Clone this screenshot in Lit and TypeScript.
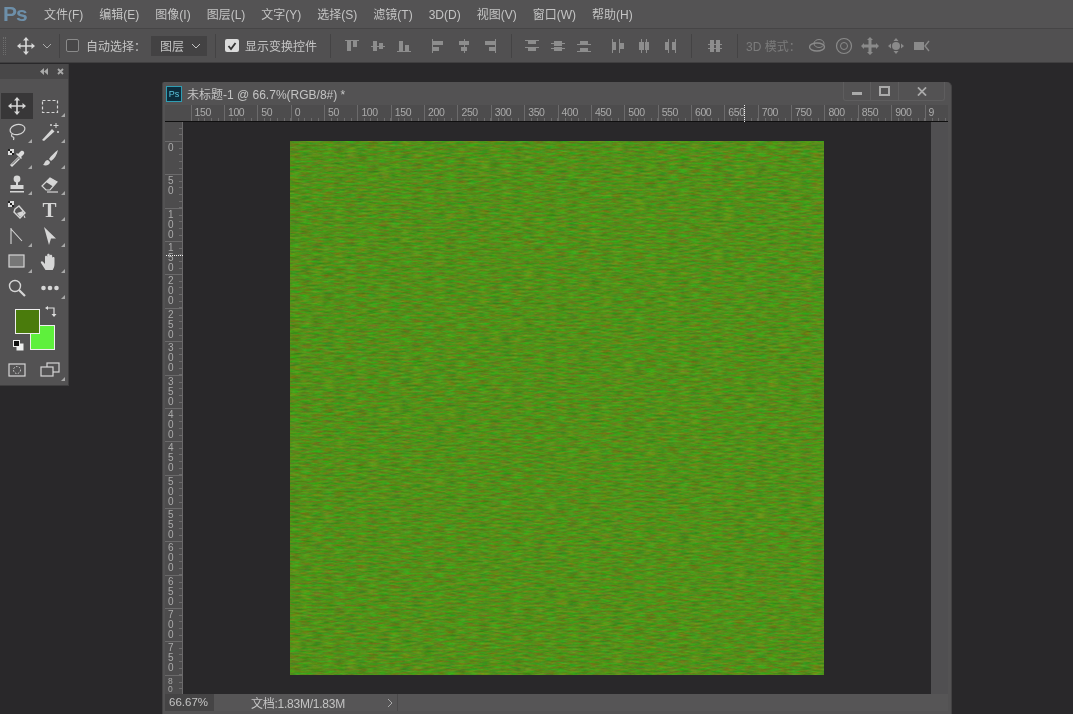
import { css, html, LitElement, svg } from "lit";
import { customElement } from "lit/decorators.js";

const MENU = ["文件(F)", "编辑(E)", "图像(I)", "图层(L)", "文字(Y)", "选择(S)", "滤镜(T)", "3D(D)", "视图(V)", "窗口(W)", "帮助(H)"];

// each align icon: [x, y, w, h] bars on a 16 box, first ones are the guide lines
type Bars = number[][];
const ALIGN_A: Bars[] = [
  [[1, 2, 14, 1], [3, 3, 4, 10], [9, 3, 4, 6]],
  [[1, 8, 14, 1], [3, 3, 4, 10], [9, 5, 4, 6]],
  [[1, 13, 14, 1], [3, 3, 4, 10], [9, 7, 4, 6]],
];
const ALIGN_B: Bars[] = [
  [[2, 1, 1, 14], [3, 3, 10, 4], [3, 9, 6, 4]],
  [[8, 1, 1, 14], [3, 3, 10, 4], [5, 9, 6, 4]],
  [[13, 1, 1, 14], [3, 3, 10, 4], [7, 9, 6, 4]],
];
const ALIGN_C: Bars[] = [
  [[1, 2, 14, 1], [1, 9, 14, 1], [4, 3, 8, 3], [4, 10, 8, 3]],
  [[1, 5, 14, 1], [1, 10, 14, 1], [4, 3, 8, 5], [4, 9, 8, 4]],
  [[1, 6, 14, 1], [1, 13, 14, 1], [4, 3, 8, 3], [4, 10, 8, 3]],
];
const ALIGN_D: Bars[] = [
  [[2, 1, 1, 14], [9, 1, 1, 14], [3, 4, 3, 8], [10, 5, 4, 6]],
  [[5, 1, 1, 14], [10, 1, 1, 14], [3, 4, 5, 8], [9, 4, 4, 8]],
  [[6, 1, 1, 14], [13, 1, 1, 14], [3, 4, 3, 8], [10, 4, 3, 8]],
];
const ALIGN_E: Bars[] = [[[3, 2, 4, 12], [9, 2, 4, 12], [1, 6, 14, 1], [1, 10, 14, 1]]];

const alignIcon = (bars: Bars) => html`<span class="align">
  <svg width="16" height="16" viewBox="0 0 16 16" fill="#8d8d8d">
    ${bars.map(([x, y, w, h]) => svg`<rect x=${x} y=${y} width=${w} height=${h}></rect>`)}
  </svg>
</span>`;

const moveIcon = svg`<path d="M10 2v16M2 10h16" stroke="currentColor" stroke-width="1.6" fill="none"/>
  <path d="M10 1l3 3.5H7zM10 19l3-3.5H7zM1 10l3.5-3v6zM19 10l-3.5-3v6z" fill="currentColor"/>`;

const checker = svg`<rect x="1" y="1" width="6" height="6" fill="#ddd"/><path d="M1 1h2v2H1zM3 3h2v2H3zM5 5h2v2H5z" fill="#222"/>`;

const TOOLS = [
  { icon: moveIcon, corner: false, active: true },
  { icon: svg`<rect x="2.5" y="4.5" width="15" height="12" fill="none" stroke="currentColor" stroke-width="1.2" stroke-dasharray="3 2"/>`, corner: true },
  { icon: svg`<ellipse cx="10.5" cy="7.5" rx="7.5" ry="5" transform="rotate(-12 10.5 7.5)" fill="none" stroke="currentColor" stroke-width="1.2"/><path d="M5 12c-1 2 0 3 1 3s1 1 .5 3" fill="none" stroke="currentColor" stroke-width="1.2"/>`, corner: true },
  { icon: svg`<path d="M2 18L12 7l2.5 2.5L4 19z" fill="currentColor"/><path d="M16 1v5M13.5 3.5h5M11 2v2M10 3h2M18 9v2M17 10h2" stroke="currentColor" fill="none"/>`, corner: true },
  { icon: svg`${checker}<path d="M4 18l-1-1 8-8 2 2-8 8zM11 6l3-3c2-1 4 1 3 3l-3 3 1 1-1 1-5-5 1-1z" fill="#ddd"/><path d="M5 16.5l6.5-6.5" stroke="#555" fill="none"/>`, corner: true },
  { icon: svg`<path d="M18 2c-3 2-7 6-9 9l2 2c3-2 6-6 7-11zM8 12c-3 0-3 3-5 5 3 1 7 0 7-3z" fill="currentColor"/>`, corner: true },
  { icon: svg`<circle cx="10" cy="5" r="3.4" fill="currentColor"/><path d="M9 8h2v3h5.500v4H3.500v-4H9zM3 17h14v1.500H3z" fill="currentColor"/>`, corner: true },
  { icon: svg`<path d="M2 12l8-8 7 4-7 8H6z" fill="none" stroke="currentColor" stroke-width="1.2"/><path d="M10 4l7 4-4 4.500-7-4.500z" fill="currentColor"/><path d="M7 18h11" stroke="currentColor" stroke-width="1.2"/>`, corner: true },
  { icon: svg`${checker}<path d="M8 9l4-3 6 7-5 5-6-6z" fill="none" stroke="currentColor" stroke-width="1.4"/><path d="M10 13l6-2 1 3-4 3z" fill="currentColor"/><path d="M17 15c1 1 2 3 1 3s-1.500-1-1-3z" fill="currentColor"/>`, corner: false },
  { text: "T", corner: true },
  { icon: svg`<path d="M4 2v16M4 3l11 12" stroke="currentColor" stroke-width="1.1" fill="none"/>`, corner: true },
  { icon: svg`<path d="M4 1l12 11.500h-5l-2 6.500z" fill="currentColor"/>`, corner: true },
  { icon: svg`<rect x="2" y="3" width="15" height="12" fill="#777" stroke="currentColor" stroke-width="1.2"/>`, corner: true },
  { icon: svg`<path d="M5.500 18L1 11c-.8-1.500 1-2.500 2-1.300L5 12V5c0-1.600 2.200-1.600 2.200 0V3c0-1.700 2.500-1.700 2.500 0v1c0-1.600 2.500-1.600 2.500 0v2c0-1.400 2.300-1.400 2.300 0v6c0 3-1 4.500-1.800 6z" fill="currentColor"/>`, corner: true },
  { icon: svg`<circle cx="8" cy="8" r="5.500" fill="none" stroke="currentColor" stroke-width="1.4"/><path d="M12 12l6 6" stroke="currentColor" stroke-width="2.200"/>`, corner: false },
  { icon: svg`<circle cx="3.500" cy="10" r="2.300" fill="currentColor"/><circle cx="10" cy="10" r="2.300" fill="currentColor"/><circle cx="16.500" cy="10" r="2.300" fill="currentColor"/>`, corner: true },
];

const MODE_3D = [
  svg`<ellipse cx="10" cy="6.500" rx="5" ry="4" fill="none" stroke="currentColor"/><ellipse cx="8" cy="10" rx="7.500" ry="4" fill="none" stroke="currentColor" stroke-width="1.400"/>`,
  svg`<circle cx="9" cy="9" r="7.500" fill="none" stroke="currentColor" stroke-width="1.200"/><circle cx="9" cy="9" r="3.500" fill="none" stroke="currentColor"/>`,
  svg`<path d="M9 2v14M2 9h14" stroke="currentColor" stroke-width="3" fill="none"/><path d="M9 0l3 3H6zM9 18l3-3H6zM0 9l3-3v6zM18 9l-3-3v6z" fill="currentColor"/>`,
  svg`<circle cx="9" cy="9" r="4" fill="currentColor"/><path d="M9 1l2.500 3h-5zM9 17l2.500-3h-5zM1 9l3-2.500v5zM17 9l-3-2.500v5z" fill="currentColor"/>`,
  svg`<rect x="1" y="5" width="10" height="8" fill="currentColor"/><path d="M16 4l-4 5 4 5" fill="none" stroke="currentColor" stroke-width="1.400"/>`,
];

const H_LABELS = [150, 100, 50, 0, 50, 100, 150, 200, 250, 300, 350, 400, 450, 500, 550, 600, 650, 700, 750, 800, 850, 900, 9];
// the window cuts the last label off after two digits
const V_LABELS = [...Array.from({ length: 16 }, (_, i) => String(i * 50)), "80"];

@customElement("app-root")
export class AppRoot extends LitElement {
  static styles = css`
    * {
      box-sizing: border-box;
    }

    :host {
      display: block;
      width: 1073px;
      height: 714px;
      overflow: hidden;
      font-family: "Liberation Sans", "Noto Sans CJK SC", sans-serif;
      font-size: 12px;
      color: #c4c4c4;
    }

    .app {
      position: relative;
      height: 714px;
      background: #29282a;
      filter: blur(0.5px);
    }

    .menubar {
      display: flex;
      align-items: center;
      height: 28px;
      background: #545354;
    }
    .logo {
      width: 44px;
      padding-left: 3px;
      font-size: 21px;
      font-weight: bold;
      letter-spacing: -1px;
      color: #6d8fa9;
    }
    .menu {
      display: flex;
      align-items: baseline;
      gap: 16px;
      margin-top: -2px;
      white-space: nowrap;
    }

    .options {
      display: flex;
      align-items: center;
      height: 35px;
      background: #515051;
      border-top: 1px solid #464546;
      border-bottom: 1px solid #403f40;
    }
    .grip {
      width: 3px;
      height: 18px;
      margin: 0 10px 0 3px;
      border-left: 1px dotted #6c6c6c;
      border-right: 1px dotted #6c6c6c;
    }
    .opt-move {
      display: flex;
      color: #d8d8d8;
    }
    .chev {
      margin-left: 5px;
      display: flex;
      color: #aaa;
    }
    .sep {
      width: 1px;
      height: 24px;
      background: #444344;
    }
    .sep-a {
      margin: 0 6px 0 6px;
    }
    .sep-b {
      margin: 0 9px 0 8px;
    }
    .sep-f {
      margin: 0 7px 0 8px;
    }
    .sep-c {
      margin: 0 10px 0 8px;
    }
    .sep-d {
      margin: 0 8px 0 13px;
    }
    .sep-e {
      margin: 0 4px 0 9px;
    }
    .box {
      width: 13px;
      height: 13px;
      border: 1px solid #8a8a8a;
      border-radius: 2px;
      background: #484748;
    }
    .auto {
      margin-left: 7px;
      white-space: nowrap;
    }
    .select {
      display: flex;
      align-items: center;
      justify-content: space-between;
      width: 56px;
      height: 20px;
      margin-left: 5px;
      padding: 0 5px 0 9px;
      background: #434243;
    }
    .check {
      display: flex;
      align-items: center;
      justify-content: center;
      width: 14px;
      height: 13px;
      border-radius: 2px;
      background: #dcdcdc;
    }
    .show {
      margin-left: 6px;
      white-space: nowrap;
    }
    .align {
      display: flex;
      justify-content: center;
      width: 26px;
    }
    .group {
      display: flex;
    }
    .gap {
      margin-left: 8px;
    }
    .mode {
      margin-left: 4px;
      width: 59px;
      white-space: nowrap;
      color: #7c7c7c;
    }
    .mode3d {
      display: flex;
      color: #8a8a8a;
    }
    .mode3d span {
      display: flex;
      justify-content: center;
      width: 26px;
    }

    .toolbox {
      position: absolute;
      left: 0;
      top: 64px;
      width: 69px;
      height: 322px;
      background: #535253;
      border-right: 1px solid #3f3e3f;
      border-bottom: 1px solid #3f3e3f;
    }
    .tb-head {
      display: flex;
      align-items: center;
      justify-content: flex-end;
      gap: 9px;
      height: 15px;
      padding-right: 4px;
      background: #484748;
      color: #a9a9a9;
    }
    .tools {
      display: grid;
      grid-template-columns: 32px 33px;
      grid-auto-rows: 26px;
      padding: 14px 0 0 1px;
    }
    .tool {
      position: relative;
      display: flex;
      align-items: center;
      justify-content: center;
      color: #d6d6d6;
    }
    .tool.active {
      background: #383738;
    }
    .tool.corner::after {
      content: "";
      position: absolute;
      right: 1px;
      bottom: 2px;
      border-style: solid;
      border-width: 0 0 4px 4px;
      border-color: transparent transparent #a8a8a8 transparent;
    }
    .tool-t {
      font-family: "Liberation Serif", serif;
      font-weight: bold;
      font-size: 21px;
      line-height: 1;
    }
    .wells {
      position: relative;
      height: 56px;
    }
    .fg,
    .bg {
      position: absolute;
      width: 25px;
      height: 25px;
      border: 1px solid #eee;
    }
    .fg {
      left: 15px;
      top: 8px;
      background: #4a7b0c;
      z-index: 1;
    }
    .bg {
      left: 30px;
      top: 24px;
      background: #5ef03c;
    }
    .swap {
      position: absolute;
      left: 45px;
      top: 5px;
      display: flex;
      color: #ddd;
    }
    .defaults {
      position: absolute;
      left: 13px;
      top: 39px;
      display: flex;
    }
    .tools.last {
      padding-top: 0;
    }

    .doc {
      position: absolute;
      left: 162px;
      top: 82px;
      display: flex;
      flex-direction: column;
      width: 790px;
      height: 632px;
      padding-left: 2px;
      padding-right: 3px;
      background: #535253;
      border-radius: 2px 5px 0 0;
      border-left: 1px solid #434243;
      border-right: 1px solid #434243;
    }
    .title {
      display: flex;
      align-items: flex-start;
      height: 23px;
      flex: none;
    }
    .ps {
      display: flex;
      align-items: center;
      justify-content: center;
      width: 16px;
      height: 16px;
      margin: 4px 0 0 1px;
      border: 1px solid #2f9db3;
      background: #0c2c3c;
      font-size: 9px;
      color: #5cc4dc;
    }
    .name {
      margin: 3px 0 0 5px;
      white-space: nowrap;
      flex: 1;
    }
    .winbtns {
      display: flex;
      height: 19px;
      margin-right: 3px;
      border: 1px solid #5e5d5e;
      border-top: none;
      border-radius: 0 0 3px 3px;
    }
    .winbtns span {
      display: flex;
      align-items: center;
      justify-content: center;
      width: 27px;
      border-right: 1px solid #5e5d5e;
      color: #aaa;
    }
    .winbtns span:nth-child(2) {
      width: 28px;
    }
    .winbtns span:last-child {
      width: 45px;
      border-right: none;
    }

    .hruler {
      display: flex;
      flex: none;
      height: 17px;
      padding-left: 25.6px;
      overflow: hidden;
      background: #4d4c4d;
      border-bottom: 1px solid #0f0f0f;
    }
    .hcell {
      flex: 0 0 33.37px;
      padding-left: 3px;
      border-left: 1px solid #6b6a6b;
      font-size: 10.500px;
      line-height: 15px;
      letter-spacing: -0.4px;
      color: #aaa;
      background: repeating-linear-gradient(90deg, transparent 0 5.670px, #6b6a6b 5.670px 6.670px) left bottom / 100% 3px no-repeat;
    }

    .mid {
      display: flex;
      flex: 1;
      min-height: 0;
    }
    .vruler {
      flex: none;
      width: 18px;
      overflow: hidden;
      background: #4d4c4d;
      border-right: 1px solid #6b6a6b;
    }
    .vcell {
      height: 33.37px;
      padding: 1px 0 0 3px;
      border-top: 1px solid #6b6a6b;
      font-size: 10px;
      line-height: 10px;
      color: #aaa;
      background: repeating-linear-gradient(180deg, transparent 0 5.670px, #6b6a6b 5.670px 6.670px) right top / 3px 100% no-repeat;
    }
    .vcell.head {
      height: 19px;
      border-top: none;
    }
    .vcell:last-child {
      height: 19px;
      font-size: 8.500px;
      line-height: 8.500px;
    }
    .canvas {
      flex: 1;
      padding: 19px 0 0 107px;
      background: #29282a;
    }
    .grass {
      display: block;
      width: 534px;
      height: 534px;
    }
    .gutter {
      flex: none;
      width: 17px;
      background: #504f51;
    }

    .status {
      display: flex;
      flex: none;
      height: 17px;
      margin-bottom: 3px;
      align-items: center;
      background: #565556;
    }
    .zoom {
      width: 49px;
      height: 100%;
      padding-left: 4px;
      line-height: 17px;
      font-size: 11.500px;
      background: #454445;
    }
    .docinfo {
      width: 135px;
      margin-left: 37px;
      letter-spacing: -0.25px;
      white-space: nowrap;
    }
    .chevright {
      display: flex;
      margin-right: 3px;
      color: #aaa;
    }
    .status-rest {
      flex: 1;
      height: 100%;
      border-left: 1px solid #4a494a;
    }

    .mark-h,
    .mark-v {
      position: absolute;
    }
    .mark-h {
      left: 744px;
      top: 105px;
      height: 17px;
      border-left: 1px dotted #eee;
    }
    .mark-v {
      left: 166px;
      top: 255px;
      width: 17px;
      border-top: 1px dotted #eee;
    }
  `;

  render() {
    return html`
      <div class="app">
        <div class="menubar">
          <div class="logo">Ps</div>
          <div class="menu">${MENU.map((m) => html`<span>${m}</span>`)}</div>
        </div>

        ${this.optionsBar()} ${this.toolbox()} ${this.docWindow()}

        <div class="mark-h"></div>
        <div class="mark-v"></div>
      </div>
    `;
  }

  optionsBar() {
    const chevron = html`<svg width="12" height="12" viewBox="0 0 12 12">
      <path d="M2 4l4 4 4-4" fill="none" stroke="currentColor" />
    </svg>`;
    return html`
      <div class="options">
        <div class="grip"></div>
        <span class="opt-move"><svg width="20" height="20" viewBox="0 0 20 20">${moveIcon}</svg></span>
        <span class="chev">${chevron}</span>
        <div class="sep sep-a"></div>
        <div class="box"></div>
        <span class="auto">自动选择：</span>
        <div class="select"><span>图层</span>${chevron}</div>
        <div class="sep sep-b"></div>
        <div class="check">
          <svg width="10" height="10" viewBox="0 0 10 10">
            <path d="M1.500 5l2.500 3 4.500-6" fill="none" stroke="#333" stroke-width="1.800" />
          </svg>
        </div>
        <span class="show">显示变换控件</span>
        <div class="sep sep-d"></div>
        <div class="group">${ALIGN_A.map(alignIcon)}</div>
        <div class="group gap">${ALIGN_B.map(alignIcon)}</div>
        <div class="sep sep-f"></div>
        <div class="group">${ALIGN_C.map(alignIcon)}</div>
        <div class="group gap">${ALIGN_D.map(alignIcon)}</div>
        <div class="sep sep-c"></div>
        <div class="group">${ALIGN_E.map(alignIcon)}</div>
        <div class="sep sep-e"></div>
        <span class="mode">3D 模式：</span>
        <div class="mode3d">
          ${MODE_3D.map((i) => html`<span><svg width="18" height="18" viewBox="0 0 18 18">${i}</svg></span>`)}
        </div>
      </div>
    `;
  }

  toolbox() {
    return html`
      <div class="toolbox">
        <div class="tb-head">
          <svg width="8" height="7" viewBox="0 0 8 7"><path d="M4 0v7L0 3.500zM8 0v7L4 3.500z" fill="currentColor" /></svg>
          <svg width="7" height="7" viewBox="0 0 7 7"><path d="M1 1l5 5M6 1L1 6" stroke="currentColor" stroke-width="1.800" /></svg>
        </div>
        <div class="tools">
          ${TOOLS.map(
            (t) => html`<div class="tool ${t.corner ? "corner" : ""} ${t.active ? "active" : ""}">
              ${t.text
                ? html`<span class="tool-t">${t.text}</span>`
                : html`<svg width="20" height="20" viewBox="0 0 20 20">${t.icon}</svg>`}
            </div>`,
          )}
        </div>
        <div class="wells">
          <div class="fg"></div>
          <div class="bg"></div>
          <span class="swap">
            <svg width="12" height="12" viewBox="0 0 12 12">
              <path d="M3 2h6v6" fill="none" stroke="currentColor" stroke-width="1.200" />
              <path d="M0 2l3-2v4zM9 11l-2.500-3h5z" fill="currentColor" />
            </svg>
          </span>
          <span class="defaults">
            <svg width="11" height="11" viewBox="0 0 11 11">
              <rect x="3.500" y="3.500" width="7" height="7" fill="#eee" />
              <rect x="0.500" y="0.500" width="6" height="6" fill="#111" stroke="#eee" />
            </svg>
          </span>
        </div>
        <div class="tools last">
          <div class="tool">
            <svg width="20" height="20" viewBox="0 0 20 20">
              <rect x="2" y="4" width="16" height="12" fill="none" stroke="currentColor" stroke-width="1.200" />
              <circle cx="10" cy="10" r="3.500" fill="none" stroke="currentColor" stroke-dasharray="1.500 1.500" />
            </svg>
          </div>
          <div class="tool corner">
            <svg width="20" height="20" viewBox="0 0 20 20">
              <rect x="7" y="3" width="12" height="9" fill="none" stroke="currentColor" stroke-width="1.200" />
              <rect x="1" y="7" width="12" height="9" fill="#535253" stroke="currentColor" stroke-width="1.200" />
            </svg>
          </div>
        </div>
      </div>
    `;
  }

  docWindow() {
    return html`
      <div class="doc">
        <div class="title">
          <div class="ps">Ps</div>
          <div class="name">未标题-1 @ 66.7%(RGB/8#) *</div>
          <div class="winbtns">
            <span><svg width="10" height="10" viewBox="0 0 10 10"><rect y="6" width="10" height="3" fill="currentColor" /></svg></span>
            <span><svg width="11" height="10" viewBox="0 0 11 10"><rect x="1" y="1" width="9" height="8" fill="none" stroke="currentColor" stroke-width="2" /></svg></span>
            <span><svg width="10" height="9" viewBox="0 0 11 10"><path d="M1 0.500l9 9M10 0.500l-9 9" stroke="currentColor" stroke-width="2" /></svg></span>
          </div>
        </div>
        <div class="hruler">${H_LABELS.map((l) => html`<div class="hcell">${l}</div>`)}</div>
        <div class="mid">
          <div class="vruler">
            <div class="vcell head"></div>
            ${V_LABELS.map((l) => html`<div class="vcell">${[...l].map((c) => html`<div>${c}</div>`)}</div>`)}
          </div>
          <div class="canvas">
            <svg class="grass" viewBox="0 0 534 534">
              <filter id="grass" x="0" y="0" width="100%" height="100%" color-interpolation-filters="sRGB">
                <feTurbulence type="fractalNoise" baseFrequency="0.09 0.5" numOctaves="4" seed="7" />
                <feColorMatrix
                  type="matrix"
                  values="0.450 0 0 0 0.100
                          -0.180 0.280 0 0 0.510
                          0 0 0.120 0 0.040
                          0 0 0 0 1"
                />
              </filter>
              <rect width="534" height="534" filter="url(#grass)" />
            </svg>
          </div>
          <div class="gutter"></div>
        </div>
        <div class="status">
          <div class="zoom">66.67%</div>
          <div class="docinfo">文档:1.83M/1.83M</div>
          <span class="chevright">
            <svg width="8" height="10" viewBox="0 0 8 10"><path d="M2 1l4 4-4 4" fill="none" stroke="currentColor" /></svg>
          </span>
          <div class="status-rest"></div>
        </div>
      </div>
    `;
  }
}
